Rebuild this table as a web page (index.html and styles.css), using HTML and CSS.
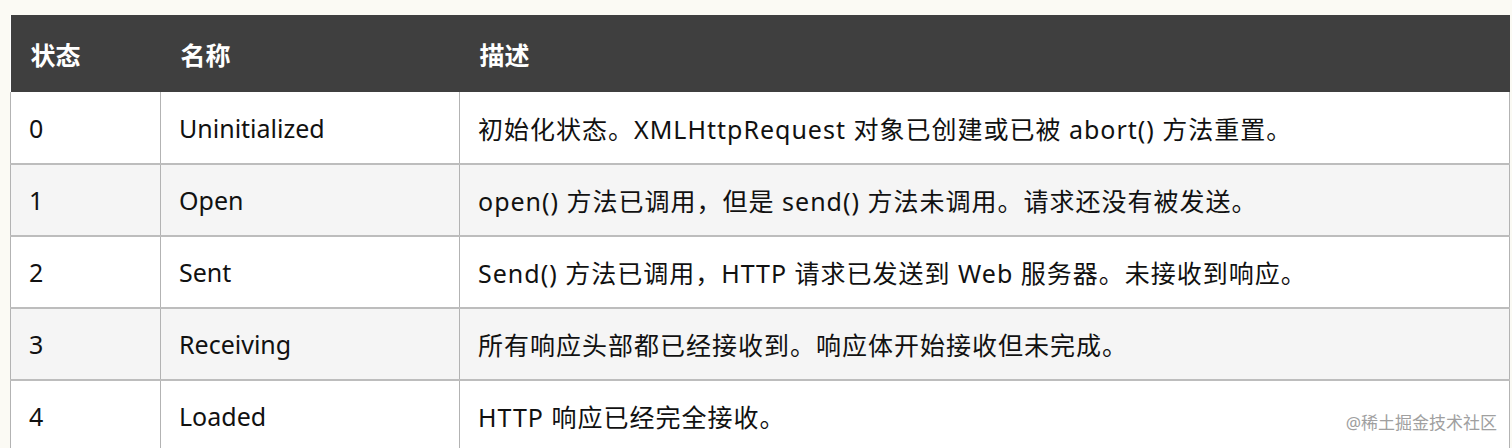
FILE: index.html
```html
<!DOCTYPE html>
<html lang="zh-CN">
  <head>
    <meta charset="UTF-8" />
    <meta name="viewport" content="width=device-width, initial-scale=1.0" />
    <title>XMLHttpRequest readyState</title>
    <link rel="stylesheet" href="styles.css">
  </head>

  <body>
    <div class="page">
      <table class="state-table">
        <colgroup>
          <col class="col-state" />
          <col class="col-name" />
          <col class="col-desc" />
        </colgroup>
        <thead>
          <tr>
            <th>状态</th>
            <th>名称</th>
            <th>描述</th>
          </tr>
        </thead>
        <tbody>
          <tr>
            <td>0</td>
            <td>Uninitialized</td>
            <td class="desc">初始化状态。XMLHttpRequest 对象已创建或已被 abort() 方法重置。</td>
          </tr>
          <tr>
            <td>1</td>
            <td>Open</td>
            <td class="desc">open() 方法已调用，但是 send() 方法未调用。请求还没有被发送。</td>
          </tr>
          <tr>
            <td>2</td>
            <td>Sent</td>
            <td class="desc">Send() 方法已调用，HTTP 请求已发送到 Web 服务器。未接收到响应。</td>
          </tr>
          <tr>
            <td>3</td>
            <td>Receiving</td>
            <td class="desc">所有响应头部都已经接收到。响应体开始接收但未完成。</td>
          </tr>
          <tr>
            <td>4</td>
            <td>Loaded</td>
            <td class="desc">HTTP 响应已经完全接收。</td>
          </tr>
        </tbody>
      </table>
      <span class="watermark">@稀土掘金技术社区</span>
    </div>
  </body>
</html>
```

FILE: styles.css
```css
* {
  margin: 0;
  padding: 0;
  box-sizing: border-box;
}

body {
  background: #fbfaf4;
  font-family: "Noto Sans", "Noto Sans CJK SC", sans-serif;
  color: #111;
  overflow: hidden;
}

.page {
  position: relative;
  padding: 15px 2px 0 10px;
}

.state-table {
  width: 1500px;
  border-collapse: collapse;
  table-layout: fixed;
  background: #fff;
}

.col-state {
  width: 150px;
}

.col-name {
  width: 299px;
}

.state-table th {
  height: 77px;
  background: #3f3f3f;
  color: #fff;
  font-size: 25px;
  font-weight: 700;
  text-align: left;
  padding: 0 20px;
}

.state-table td {
  height: 72px;
  font-size: 25px;
  padding: 0 18px;
  border: 1px solid #b3b3b3;
  border-top: 0;
}

.state-table td.desc {
  letter-spacing: 1px;
}

.state-table tbody tr:nth-child(even) td {
  background: #f5f5f5;
  border-top: 2px solid #bdbdbd;
  border-bottom: 2px solid #bdbdbd;
}

.watermark {
  position: absolute;
  right: 15px;
  top: 409px;
  font-size: 17px;
  color: #a0a0a0;
  text-shadow: 0 0 2px #fff;
}
```
